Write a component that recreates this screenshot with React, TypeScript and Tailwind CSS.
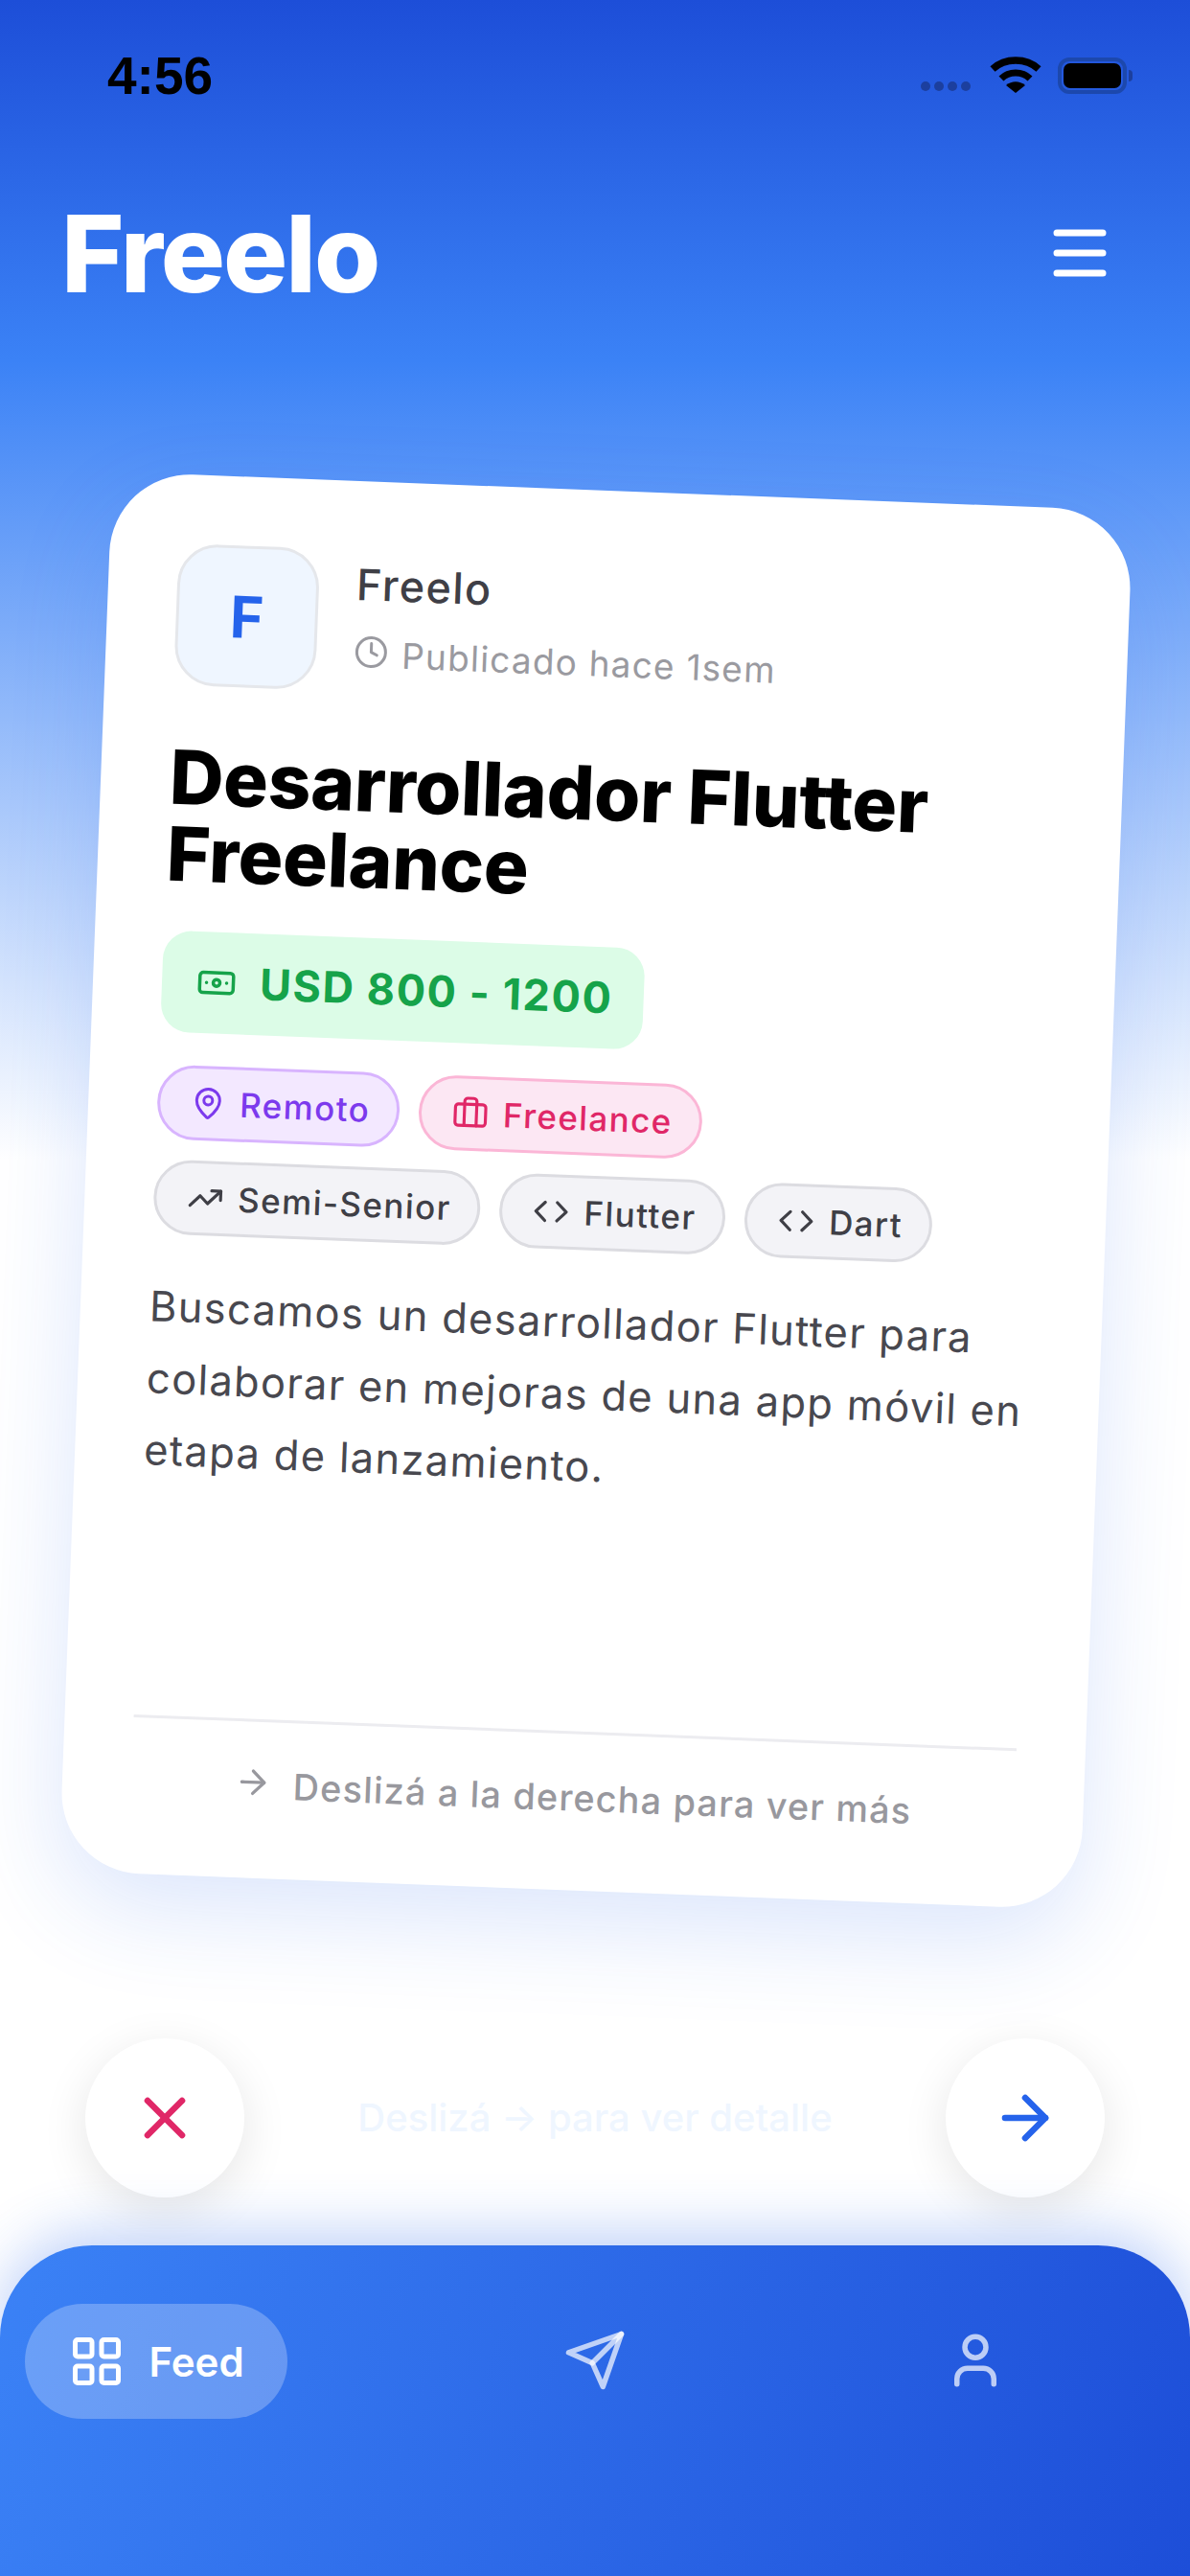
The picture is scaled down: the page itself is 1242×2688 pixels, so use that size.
import { ArrowRight, Banknote, Briefcase, Clock, Code, LayoutGrid, MapPin, TrendingUp, User, X } from "lucide-react";
import type { ReactNode } from "react";

function StatusBar() {
  return (
    <div className="h-[156px] shrink-0 flex items-start justify-between pl-[112px] pr-[60px] pt-[51px]">
      <span className="text-[55px] leading-[56px] font-semibold text-black font-['Liberation_Sans',sans-serif]">4:56</span>
      <div className="flex items-center gap-[20px] pt-[8px]">
        {/* signal dots */}
        <div className="flex gap-[4px] mt-[22px]">
          <span className="w-[10px] h-[10px] rounded-full bg-[#1c3f9e]" />
          <span className="w-[10px] h-[10px] rounded-full bg-[#1c3f9e]" />
          <span className="w-[10px] h-[10px] rounded-full bg-[#1c3f9e]" />
          <span className="w-[10px] h-[10px] rounded-full bg-[#1c3f9e]" />
        </div>
        <svg width="54" height="40" viewBox="0 0 54 40" fill="none" className="-mr-[3px]">
          <path d="M3 13C16 1 38 1 51 13" stroke="#000" strokeWidth="7.5" />
          <path d="M12 23C20 15 34 15 42 23" stroke="#000" strokeWidth="7" />
          <path d="M27 38L17 30C23 25 31 25 37 30Z" fill="#000" />
        </svg>
        <div className="flex items-center">
          <div className="w-[72px] h-[38px] rounded-[12px] border-[4px] border-[#1c48ad] p-[2px]">
            <div className="w-full h-full rounded-[7px] bg-black" />
          </div>
          <span className="w-[4px] h-[12px] ml-[2px] rounded-r-full bg-[#1c3f9e]" />
        </div>
      </div>
    </div>
  );
}

function Tag({ className, icon, children }: { className: string; icon: ReactNode; children: ReactNode }) {
  return (
    <span className={`h-[78px] rounded-full border-[3px] pl-[32px] pr-[28px] flex items-center gap-[15px] text-[35px] font-medium tracking-[1.4px] ${className}`}>
      {icon}
      {children}
    </span>
  );
}

function JobCard() {
  return (
    <div className="ml-[2px] w-[1066px] h-[1461px] rotate-[2.2deg] bg-white rounded-[84px] shadow-[0_36px_100px_rgba(37,99,235,0.16)] pt-[72px] px-[72px] pb-[70px] flex flex-col">
      <div className="flex items-start gap-[39px]">
        <div className="w-[148px] h-[148px] rounded-[42px] bg-[#eff6ff] border-[3px] border-[#e5e7eb] flex items-center justify-center text-[60px] font-bold text-[#2563eb]">
          F
        </div>
        <div className="pt-[6px]">
          <p className="text-[45px] leading-[60px] font-medium text-[#3f3f46] tracking-[1.4px]">Freelo</p>
          <p className="mt-[16px] flex items-center gap-[14px] text-[37px] leading-[54px] text-[#9a9aa0] tracking-[1.2px]">
            <Clock className="w-[36px] h-[36px] -mt-[6px]" strokeWidth={2} />
            Publicado hace 1sem
          </p>
        </div>
      </div>

      <h1 className="mt-[56px] text-[78px] leading-[80px] font-extrabold text-black tracking-[-0.2px] w-[880px]">
        Desarrollador Flutter Freelance
      </h1>

      <div className="mt-[40px] self-start h-[106px] pl-[36px] pr-[32px] rounded-[30px] bg-[#dcfce7] flex items-center gap-[24px] text-[45px] font-bold text-[#16a34a] tracking-[1.6px]">
        <Banknote className="w-[42px] h-[42px]" strokeWidth={2} />
        USD 800 - 1200
      </div>

      <div className="mt-[34px] flex flex-col gap-[21px]">
        <div className="flex gap-[20px]">
          <Tag className="bg-[#f3e8ff] border-[#d8b4fe] text-[#7c3aed]" icon={<MapPin className="w-[36px] h-[36px]" />}>Remoto</Tag>
          <Tag className="bg-[#fce7f3] border-[#fbb6d6] text-[#e02767]" icon={<Briefcase className="w-[38px] h-[38px]" />}>Freelance</Tag>
        </div>
        <div className="flex gap-[20px]">
          <Tag className="bg-[#f3f3f7] border-[#dcdce1] text-[#3f3f46]" icon={<TrendingUp className="w-[38px] h-[38px]" />}>Semi-Senior</Tag>
          <Tag className="bg-[#f3f3f7] border-[#dcdce1] text-[#3f3f46]" icon={<Code className="w-[38px] h-[38px]" />}>Flutter</Tag>
          <Tag className="bg-[#f3f3f7] border-[#dcdce1] text-[#3f3f46]" icon={<Code className="w-[38px] h-[38px]" />}>Dart</Tag>
        </div>
      </div>

      <p className="mt-[38px] text-[43.5px] leading-[75px] text-[#48484f] tracking-[1.3px]">
        Buscamos un desarrollador Flutter para colaborar en mejoras de una app móvil en etapa de lanzamiento.
      </p>

      <div className="mt-auto border-t-[3px] border-[#ececf0] pt-[39px] flex items-center justify-center gap-[22px] text-[37.8px] leading-[54px] font-medium text-[#98989e] tracking-[1.2px]">
        <ArrowRight className="w-[40px] h-[40px] -mt-[6px]" />
        Deslizá a la derecha para ver más
      </div>
    </div>
  );
}

export default function App() {
  return (
    <div className="w-[1242px] h-[2688px] overflow-hidden flex flex-col font-['Inter',sans-serif] bg-[linear-gradient(180deg,#1d4ed8_0%,#3b82f6_14%,#ffffff_45%,#ffffff_100%)]">
      <StatusBar />

      <header className="h-[216px] shrink-0 flex items-center justify-between pl-[64px] pr-[87px]">
        <span className="text-[112px] font-extrabold text-white tracking-[-2px] leading-none">Freelo</span>
        <svg width="56" height="50" viewBox="0 0 56 50" fill="none" stroke="#fff" strokeWidth="7" strokeLinecap="round">
          <path d="M4 4h48M4 25h48M4 46h48" />
        </svg>
      </header>

      <main className="flex-1 flex items-center justify-center">
        <JobCard />
      </main>

      <div className="h-[192px] shrink-0 flex items-center justify-between px-[89px] pt-[3px]">
        <button className="w-[166px] h-[166px] rounded-full bg-white shadow-[0_12px_48px_rgba(0,0,0,0.10)] flex items-center justify-center text-[#e02767]">
          <X className="w-[72px] h-[72px]" strokeWidth={2.2} />
        </button>
        <span className="text-[40px] font-medium text-[#eff6ff]">Deslizá → para ver detalle</span>
        <button className="w-[166px] h-[166px] rounded-full bg-white shadow-[0_12px_48px_rgba(0,0,0,0.10)] flex items-center justify-center text-[#2563eb]">
          <ArrowRight className="w-[72px] h-[72px]" strokeWidth={2.2} />
        </button>
      </div>

      <nav className="mt-[39px] h-[345px] shrink-0 rounded-t-[96px] bg-[linear-gradient(110deg,#3b82f6_0%,#1d4ed8_100%)] shadow-[0_-12px_60px_rgba(37,99,235,0.3)] pt-[61px] pl-[26px] flex items-start">
        <div className="h-[120px] w-[274px] rounded-full bg-white/25 flex items-center justify-center gap-[24px] text-white text-[42px] font-semibold">
          <LayoutGrid className="w-[60px] h-[60px]" />
          Feed
        </div>
        <svg width="66" height="66" viewBox="0 0 24 24" fill="none" stroke="currentColor" strokeWidth="2" strokeLinecap="round" strokeLinejoin="round" className="mt-[26px] ml-[288px] text-white/70">
          <path d="M22 2 15 22 11 13 2 9Z" />
          <path d="M22 2 11 13" />
        </svg>
        <User className="w-[66px] h-[66px] mt-[26px] ml-[331px] text-white/70" />
      </nav>
    </div>
  );
}
